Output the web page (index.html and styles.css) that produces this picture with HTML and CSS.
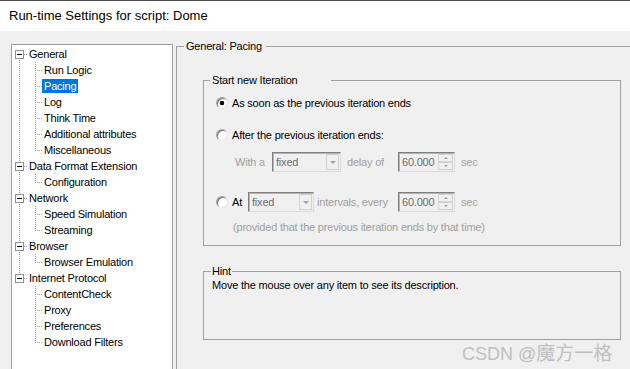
FILE: index.html
```html
<!DOCTYPE html>
<html lang="en">
  <head>
    <meta charset="UTF-8" />
    <title>Run-time Settings</title>
    <link rel="stylesheet" href="styles.css">
  </head>
  <body>
    <div class="titlebar">Run-time Settings for script: Dome</div>
    <div class="main">
      <div class="tree">
        <ul class="nodes">
          <li class="node">
            <div class="node-row"><span class="box"></span><span class="dash"></span><span class="label">General</span></div>
            <ul class="kids">
              <li class="kid"><span class="label">Run Logic</span></li>
              <li class="kid"><span class="label selected">Pacing</span></li>
              <li class="kid"><span class="label">Log</span></li>
              <li class="kid"><span class="label">Think Time</span></li>
              <li class="kid"><span class="label">Additional attributes</span></li>
              <li class="kid"><span class="label">Miscellaneous</span></li>
            </ul>
          </li>
          <li class="node">
            <div class="node-row"><span class="box"></span><span class="dash"></span><span class="label">Data Format Extension</span></div>
            <ul class="kids">
              <li class="kid"><span class="label">Configuration</span></li>
            </ul>
          </li>
          <li class="node">
            <div class="node-row"><span class="box"></span><span class="dash"></span><span class="label">Network</span></div>
            <ul class="kids">
              <li class="kid"><span class="label">Speed Simulation</span></li>
              <li class="kid"><span class="label">Streaming</span></li>
            </ul>
          </li>
          <li class="node">
            <div class="node-row"><span class="box"></span><span class="dash"></span><span class="label">Browser</span></div>
            <ul class="kids">
              <li class="kid"><span class="label">Browser Emulation</span></li>
            </ul>
          </li>
          <li class="node">
            <div class="node-row"><span class="box"></span><span class="dash"></span><span class="label">Internet Protocol</span></div>
            <ul class="kids">
              <li class="kid"><span class="label">ContentCheck</span></li>
              <li class="kid"><span class="label">Proxy</span></li>
              <li class="kid"><span class="label">Preferences</span></li>
              <li class="kid"><span class="label">Download Filters</span></li>
            </ul>
          </li>
        </ul>
      </div>

      <fieldset class="page">
        <legend>General: Pacing</legend>

        <fieldset class="group iter">
          <legend>Start new Iteration</legend>
          <div class="opt opt-first">
            <span class="radio checked"></span>
            <span class="opt-text">As soon as the previous iteration ends</span>
          </div>
          <div class="opt opt-after">
            <span class="radio"></span>
            <span class="opt-text">After the previous iteration ends:</span>
          </div>
          <div class="opt sub">
            <span class="cap cap-with">With a</span>
            <span class="combo combo-delay"><span class="combo-val">fixed</span><span class="combo-btn"></span></span>
            <span class="cap cap-delay">delay of</span>
            <span class="spin"><span class="spin-val">60.000</span><span class="spin-btns"><span class="spin-up"></span><span class="spin-down"></span></span></span>
            <span class="cap cap-sec">sec</span>
          </div>
          <div class="opt opt-at">
            <span class="radio"></span>
            <span class="at-text">At</span>
            <span class="combo combo-at"><span class="combo-val">fixed</span><span class="combo-btn"></span></span>
            <span class="cap cap-every">intervals, every</span>
            <span class="spin"><span class="spin-val">60.000</span><span class="spin-btns"><span class="spin-up"></span><span class="spin-down"></span></span></span>
            <span class="cap cap-sec">sec</span>
          </div>
          <div class="note">(provided that the previous iteration ends by that time)</div>
        </fieldset>

        <fieldset class="group hint">
          <legend>Hint</legend>
          <p>Move the mouse over any item to see its description.</p>
        </fieldset>
      </fieldset>
    </div>

    <div class="watermark">CSDN @<span class="cjk">魔方一格</span></div>
  </body>
</html>
```

FILE: styles.css
```css
body {
  margin: 0;
  width: 630px;
  height: 369px;
  overflow: hidden;
  position: relative;
  background: #f0f0f0;
  font-family: "Liberation Sans", Arial, sans-serif;
  font-size: 11px;
  letter-spacing: -0.2px;
  color: #000;
}

.titlebar {
  box-sizing: border-box;
  height: 31px;
  border-top: 1px solid #505050;
  background: #fff;
  padding-left: 9px;
  font-size: 13px;
  letter-spacing: 0;
  line-height: 30px;
}

.main {
  display: flex;
  align-items: flex-start;
  padding-left: 11px;
}

/* tree on the left */
.tree {
  box-sizing: border-box;
  flex-shrink: 0;
  width: 162px;
  height: 325px;
  margin-top: 13px;
  border: 1px solid #a0a0a0;
  border-bottom: 0;
  background: #fff;
}
.tree ul {
  list-style: none;
  margin: 0;
  padding: 0;
}
.nodes {
  padding-top: 1px !important;
}
.node {
  background: repeating-linear-gradient(to bottom, #a0a0a0 0 1px, transparent 1px 2px) 7px 0 / 1px 100% no-repeat;
}
.node:first-child {
  background-position: 7px 8px;
  background-size: 1px calc(100% - 8px);
}
.node:last-child {
  background-size: 1px 8px;
}
.node-row {
  display: flex;
  align-items: center;
  height: 16px;
}
.box {
  box-sizing: border-box;
  width: 9px;
  height: 9px;
  margin-left: 3px;
  border: 1px solid #919191;
  background: linear-gradient(#000, #000) center / 5px 1px no-repeat, #fff;
}
.dash {
  width: 3px;
  height: 1px;
  background: repeating-linear-gradient(to right, #a0a0a0 0 1px, transparent 1px 2px);
}
.label {
  padding: 0 2px;
  line-height: 14px;
  white-space: nowrap;
}
.label.selected {
  background: #0078d7;
  color: #fff;
}
.kid {
  display: flex;
  align-items: center;
  height: 16px;
  padding-left: 30px;
  background:
    repeating-linear-gradient(to bottom, #a0a0a0 0 1px, transparent 1px 2px) 23px 0 / 1px 100% no-repeat,
    repeating-linear-gradient(to right, #a0a0a0 0 1px, transparent 1px 2px) 23px 8px / 7px 1px no-repeat;
}
.kid:last-child {
  background-size: 1px 9px, 7px 1px;
}

/* group boxes */
fieldset {
  margin: 0;
  padding: 0;
  min-width: 0;
  border: 1px solid #a0a0a0;
  box-sizing: border-box;
}
legend {
  line-height: 13px;
  padding: 0 2px;
}
.page {
  flex-shrink: 0;
  width: 470px;
  height: 329px;
  margin-top: 9px;
  margin-left: 3px;
  padding-top: 21px;
  border-bottom: 0;
}
.page > legend {
  margin-left: 7px;
  padding-right: 4px;
}
.group {
  width: 418px;
  margin-left: 26px;
}
.group > legend {
  margin-left: 6px;
}
.iter {
  padding-top: 6px;
  padding-bottom: 11px;
}
.iter > legend {
  padding-right: 34px;
}
.hint {
  margin-top: 19px;
}
.hint > legend {
  margin-left: 7px;
  padding: 0 1px;
}
.hint p {
  margin: 0;
  padding: 1px 0 0 8px;
  height: 60px;
  line-height: 13px;
}

/* option rows */
.opt {
  display: flex;
  align-items: center;
  height: 20px;
  padding-left: 12px;
  white-space: nowrap;
}
.opt-after {
  margin-top: 12px;
}
.sub {
  margin-top: 7px;
  padding-left: 31px;
}
.opt-at {
  margin-top: 20px;
}
.opt-text {
  margin-left: 4px;
}
.radio {
  box-sizing: border-box;
  width: 12px;
  height: 12px;
  border-radius: 50%;
  border: 1px solid;
  border-color: #a0a0a0 #e8e8e8 #e8e8e8 #a0a0a0;
  background: #fff;
  box-shadow: inset 1px 1px 0 #6f6f6f;
}
.radio.checked {
  background: radial-gradient(circle, #000 0 2px, #fff 2.6px);
}
.at-text {
  width: 16px;
  margin-left: 4px;
}
.cap {
  color: #a0a0a0;
}
.cap-with {
  width: 37px;
}
.cap-delay {
  width: 51px;
  margin-left: 6px;
}
.cap-every {
  width: 81px;
  margin-left: 3px;
}
.cap-sec {
  margin-left: 6px;
}
.note {
  margin-top: 8px;
  padding-left: 29px;
  line-height: 14px;
  color: #a0a0a0;
  white-space: nowrap;
}

/* disabled combos and spin boxes */
.combo,
.spin {
  box-sizing: border-box;
  display: flex;
  height: 20px;
  padding: 1px;
  border: 1px solid;
  border-color: #808080 #dcdcdc #dcdcdc #808080;
  box-shadow: inset 1px 1px 0 #b4b4b4;
  color: #6d6d6d;
}
.combo-delay {
  width: 69px;
}
.combo-at {
  width: 66px;
}
.combo-val,
.spin-val {
  flex: 1;
  padding-left: 2px;
  line-height: 16px;
}
.combo-btn {
  box-sizing: border-box;
  width: 13px;
  border: 1px solid #d2d2d2;
  display: flex;
  align-items: center;
  justify-content: center;
}
.combo-btn::after {
  content: "";
  border-left: 3px solid transparent;
  border-right: 3px solid transparent;
  border-top: 3px solid #a0a0a0;
}
.spin {
  width: 57px;
}
.spin-btns {
  width: 15px;
  display: flex;
  flex-direction: column;
}
.spin-up,
.spin-down {
  flex: 1;
  box-sizing: border-box;
  border: 1px solid #d2d2d2;
  display: flex;
  align-items: center;
  justify-content: center;
}
.spin-up::after {
  content: "";
  border-left: 2px solid transparent;
  border-right: 2px solid transparent;
  border-bottom: 2px solid #a0a0a0;
}
.spin-down::after {
  content: "";
  border-left: 2px solid transparent;
  border-right: 2px solid transparent;
  border-top: 2px solid #a0a0a0;
}

.watermark {
  position: absolute;
  left: 462px;
  top: 341px;
  font-size: 18px;
  line-height: 22px;
  letter-spacing: 0;
  color: #c0c0c0;
  white-space: nowrap;
}
.watermark .cjk {
  font-family: "Noto Sans CJK SC", sans-serif;
  font-size: 19px;
}
```
